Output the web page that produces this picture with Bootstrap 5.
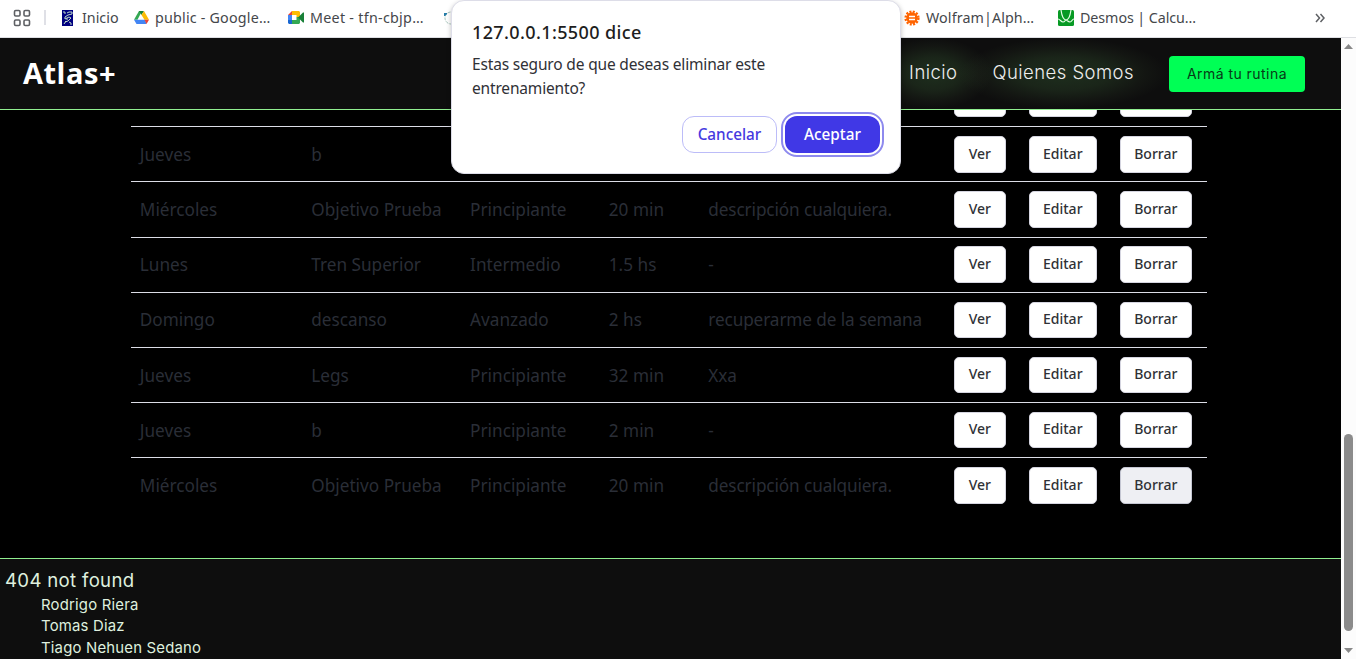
<!DOCTYPE html>
<html lang="es">
<head>
<meta charset="utf-8">
<meta name="viewport" content="width=device-width, initial-scale=1">
<title>Atlas+</title>
<link href="https://cdn.jsdelivr.net/npm/bootstrap@5.3.0/dist/css/bootstrap.min.css" rel="stylesheet">
<style>
body { font-family: "Noto Sans", "Open Sans", sans-serif; overflow: hidden; }
.bookmarks { height: 38px; border-bottom: 1px solid #dedfe3; color: #45474b; font-size: 14.3px; line-height: 20px; padding: 0 31px 2px 13px; }
.bookmarks svg { flex: none; display: block; }
.bookmark { display: flex; align-items: center; flex: none; white-space: nowrap; gap: 6px; }
.bm-inicio { width: 72px; margin-left: 16px; gap: 9px; }
.bm-drive { width: 154px; letter-spacing: .2px; }
.bm-meet { width: 155px; letter-spacing: .28px; }
.bm-world { width: 461px; }
.bm-wolfram { width: 154px; letter-spacing: .1px; }
.bm-desmos { letter-spacing: -.08px; }
.bm-sep { width: 2px; height: 15px; background: #dfe0e6; margin-left: 13px; }
.geo { font-family: "Inter", "Open Sans", sans-serif; }
.site-head { height: 72px; background: #0e0e0e; border-bottom: 1px solid #90ee90; }
.brand { font-family: "Open Sans", sans-serif; font-weight: 700; font-size: 29px; line-height: 36px; letter-spacing: .5px; margin-left: 23px; padding-bottom: 2px; }
.site-nav { margin-right: 36px; }
.site-link { font-size: 18.5px; line-height: 24px; letter-spacing: .45px; color: #eee; font-weight: 300; white-space: nowrap; padding: 22px 34px 25px; margin: 0 -34px; background: radial-gradient(closest-side, rgba(70,130,70,.28), rgba(70,120,65,.22) 45%, rgba(70,100,60,.09) 78%, rgba(60,80,50,0)); }
.btn-cta { width: 136px; height: 36px; background: #00ff55; border-radius: 4px; color: #073b17; font-size: 14px; letter-spacing: .45px; padding: 0; display: flex; align-items: center; justify-content: center; white-space: nowrap; }
.nav-gap { width: 35px; flex: none; }
.viewport-main { height: 448px; background: #000; padding: 0 134px 44.5px 131px; }
.plan { table-layout: fixed; width: 1076px; margin: 0; border-collapse: separate; border-spacing: 0; color: #2a2e37; font-size: 17.2px; }
.plan td { height: 55.2px; padding: 0 0 0 8.8px; border-bottom: 1px solid #dcdde6; vertical-align: middle; white-space: nowrap; line-height: 26px; }
.plan td.cell-text { padding-top: 1px; }
.plan td:nth-child(5) { letter-spacing: -.11px; }
.plan tr:last-child td { border-bottom-color: transparent; }
.act { height: 36.5px; background: #fff; border: 1px solid #d5d5e0; border-radius: 5px; color: #2f3136; font-size: 14px; line-height: 20px; font-weight: 500; padding: 0 0 1.5px; display: block; }
.act.hovered { background: #eeeff3; border-color: #c4c6d2; }
.act-v { width: 52px; } .act-e { width: 68px; } .act-b { width: 72px; }
.site-foot { height: 101px; background: #0e0e0e; border-top: 1px solid #90ee90; color: #dff0df; padding: 8px 0 0 5px; overflow: hidden; }
.foot-title { font-size: 18.6px; line-height: 26px; letter-spacing: .32px; }
.foot-names { font-size: 14.9px; line-height: 21.6px; letter-spacing: .2px; padding: 1.6px 0 0 36px; }
.scroller { width: 15px; background: #fcfcfc; padding: 6px 0 6px; }
.thumb { width: 9px; height: 197px; margin-top: 385px; border-radius: 5px; background: #8b8b8b; }
.prompt { position: absolute; left: 451px; top: 0; width: 450px; height: 174px; background: #fff; border: 1px solid #dddde8; border-radius: 13px; padding: 19px 20px 0; box-shadow: 0 2px 5px rgba(0,0,0,.25); z-index: 5; }
.prompt-title { font-size: 18px; line-height: 24px; letter-spacing: .38px; color: #1d1d20; font-weight: 500; }
.prompt-text { font-size: 15.5px; line-height: 24px; letter-spacing: -.17px; color: #303136; margin-top: 8px; }
.prompt-actions { gap: 8px; margin-top: 16px; }
.prompt-btn { width: 95px; height: 37px; border-radius: 12px; font-size: 15.3px; font-weight: 500; line-height: 20px; padding: 0 0 1px; }
.pb-cancel { border: 1px solid #bcbcf8; color: #4539df; background: #fff; }
.pb-ok { background: #4038e6; color: #fff; outline: 2px solid #8e8aee; outline-offset: 2px; border: 0; }
</style>
</head>
<body>
<div class="vh-100 d-flex flex-column position-relative">
  <div class="bookmarks d-flex align-items-center bg-white">
    <svg width="18" height="18" fill="none" stroke="#5e6064" stroke-width="1.6"><rect x="1.500" y="1.500" width="5.500" height="5.500" rx="1.200"/><rect x="11" y="1.500" width="5.500" height="5.500" rx="1.200"/><rect x="1.500" y="11" width="5.500" height="5.500" rx="1.200"/><rect x="11" y="11" width="5.500" height="5.500" rx="1.200"/></svg>
    <div class="bm-sep"></div>
    <div class="bookmark bm-inicio">
      <svg width="11" height="16"><path fill="#000080" d="M0 0h11v16H0z"/><path d="M1 2h2v2M5 3l2-1h3v2L6 5 3 7v2l4-2 2 1-3 3-3 1M7 12l2 1v2M2 14l2-3M5 8v2" fill="none" stroke="#c0dcc8"/></svg>
      <span>Inicio</span>
    </div>
    <div class="bookmark bm-drive">
      <svg width="15" height="14"><path fill="#34a853" d="M5 0h3L3.500 8.800H0z"/><path fill="#188038" d="M5 0h5L7.500 4z"/><path fill="#fbbc04" d="M7.500 4 10 0l5 8.800h-4.500z"/><path fill="#4285f4" d="M0 8.800h11L12.500 13H2.500z"/><path fill="#ea4335" d="M10.500 8.800H15L12.500 13z"/></svg>
      <span>public - Google…</span>
    </div>
    <div class="bookmark bm-meet">
      <svg width="16" height="13"><path fill="#4285f4" d="M0 4h4v5H0z"/><path fill="#ea4335" d="M4 0v4H0z"/><path fill="#fbbc04" d="M4 0h7l1 1v5L8.500 6V4H4z"/><path fill="#1967d2" d="M0 9h4v4H1l-1-1z"/><path fill="#34a853" d="M4 9h4.500V6H12v6l-1 1H4z"/><path fill="#188038" d="m10 6.500 5-5h1v10h-1z"/></svg>
      <span>Meet - tfn-cbjp…</span>
    </div>
    <div class="bookmark bm-world">
      <svg width="16" height="16" fill="none"><circle cx="8" cy="8" r="6" stroke="#a9c6bd" stroke-dasharray="3 1"/><path fill="#247ba8" d="M1 3h3v1L2 6H1z"/></svg>
    </div>
    <div class="bookmark bm-wolfram">
      <svg width="16" height="16"><circle cx="8" cy="8" r="5.800" fill="#ff6400"/><circle cx="8" cy="8" r="6.400" fill="none" stroke="#ff6400" stroke-width="2.400" stroke-dasharray="2 1.350"/><path d="M5 6.500h6M5 9.500h6" stroke="#fff" stroke-width="1.300"/></svg>
      <span>Wolfram|Alph…</span>
    </div>
    <div class="bookmark bm-desmos">
      <svg width="16" height="16"><rect width="16" height="16" rx="1.500" fill="#079a24"/><path d="M0 9c2 0 3 3 5 3s2-2 3-2 2 2 4 2 2-3 4-3M3 0c1 7 2.500 10 5 10s4-3 5-10" fill="none" stroke="#e6ffe6" stroke-width="1.200"/></svg>
      <span>Desmos | Calcu…</span>
    </div>
    <svg class="ms-auto" width="10" height="10" fill="none" stroke="#5e6064" stroke-width="1.500"><path d="m1 1 3.500 4L1 9M5.500 1 9 5 5.500 9"/></svg>
  </div>
  <div class="d-flex flex-grow-1">
    <div class="flex-grow-1">
      <header class="site-head d-flex align-items-center text-white overflow-hidden">
        <div class="brand">Atlas+</div>
        <nav class="site-nav geo d-flex align-items-center ms-auto">
          <a class="site-link text-decoration-none">Inicio</a>
          <span class="nav-gap"></span>
          <a class="site-link text-decoration-none">Quienes Somos</a>
          <span class="nav-gap"></span>
          <a class="btn btn-cta">Armá tu rutina</a>
        </nav>
      </header>
      <main class="viewport-main d-flex flex-column justify-content-end overflow-hidden">
        <table class="plan">
          <colgroup><col style="width:171.5px"><col style="width:158.8px"><col style="width:138.7px"><col style="width:99.5px"><col style="width:245.5px"><col style="width:75px"><col style="width:91px"><col style="width:96px"></colgroup>
          <tbody id="rows"></tbody>
        </table>
      </main>
      <footer class="site-foot geo">
        <div class="foot-title">404 not found</div>
        <div class="foot-names"><div>Rodrigo Riera</div><div>Tomas Diaz</div><div>Tiago Nehuen Sedano</div></div>
      </footer>
    </div>
    <div class="scroller d-flex flex-column align-items-center">
      <svg width="9" height="5"><path fill="#888" d="M0 5 4.500 0 9 5z"/></svg>
      <div class="thumb"></div>
      <svg class="mt-auto" width="9" height="5"><path fill="#888" d="M0 0h9L4.500 5z"/></svg>
    </div>
  </div>
  <section class="prompt" role="dialog">
    <div class="prompt-title">127.0.0.1:5500 dice</div>
    <div class="prompt-text">Estas seguro de que deseas eliminar este<br>entrenamiento?</div>
    <div class="prompt-actions d-flex justify-content-end">
      <button class="btn prompt-btn pb-cancel">Cancelar</button>
      <button class="btn prompt-btn pb-ok">Aceptar</button>
    </div>
  </section>
</div>
<script>
const plans = [
  ["", "", "", "", ""],
  ["Jueves", "b", "", "", ""],
  ["Miércoles", "Objetivo Prueba", "Principiante", "20 min", "descripción cualquiera."],
  ["Lunes", "Tren Superior", "Intermedio", "1.5 hs", "-"],
  ["Domingo", "descanso", "Avanzado", "2 hs", "recuperarme de la semana"],
  ["Jueves", "Legs", "Principiante", "32 min", "Xxa"],
  ["Jueves", "b", "Principiante", "2 min", "-"],
  ["Miércoles", "Objetivo Prueba", "Principiante", "20 min", "descripción cualquiera."]
];
const action = (cls, label) => `<td><button class="btn act ${cls}">${label}</button></td>`;
document.getElementById("rows").innerHTML = plans.map((p, i) =>
  "<tr>" + p.map(t => `<td class="cell-text">${t}</td>`).join("") +
  action("act-v", i ? "Ver" : "") + action("act-e", i ? "Editar" : "") +
  action("act-b" + (i === plans.length - 1 ? " hovered" : ""), i ? "Borrar" : "") + "</tr>").join("");
</script>
<script src="https://cdn.jsdelivr.net/npm/bootstrap@5.3.0/dist/js/bootstrap.bundle.min.js"></script>
</body>
</html>
